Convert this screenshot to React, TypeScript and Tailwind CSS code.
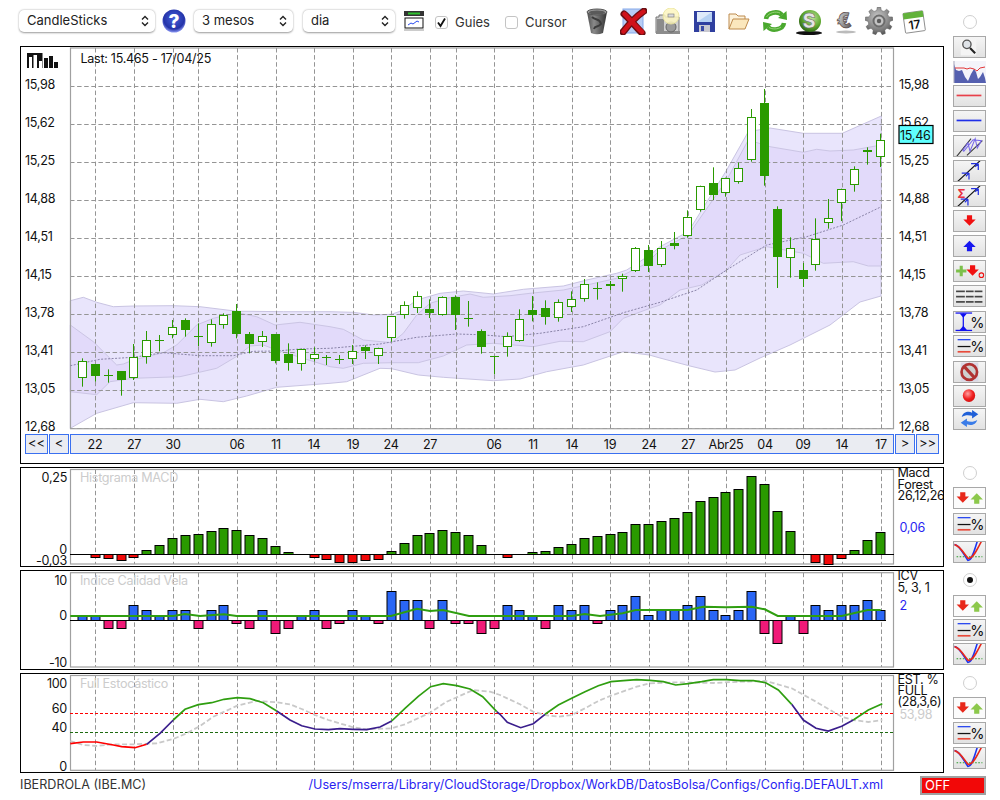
import React from "react";

const GREEN = "#2a9a00";
const VX = [95,134,173,198,237,276,314,353,391,430,456,494,533,572,610,649,688,726,765,803,842,881];
const HY = [86,124,162,200,238,276,314,352,390,428];
const PRICES = ["15,98","15,62","15,25","14,88","14,51","14,15","13,78","13,41","13,05","12,68"];
const cx = (i: number) => Math.floor(82.4 + 12.87 * i) + 0.5;
const snap = (y: number) => Math.round(y) + 0.5;

// [wickTop, bodyTop, bodyBottom, wickBottom, filled]
type C = [number, number, number, number, number];
const zA: C[] = [
  [265,274,320,350,0],[282,282,314,335,1],[298,316,316,338,0],[304,304,326,377,1],[222,262,322,330,0],
  [183,211,259,281,0],[195,209,209,244,0],[150,172,193,205,0],[145,151,176,200,1],[160,199,199,228,0],
  [148,163,217,230,0],[130,136,163,176,0],[102,124,188,205,1],[186,192,218,250,1],[183,199,214,231,0],
  [192,192,269,280,1],[220,252,275,302,1],[236,238,280,302,0],[232,253,265,274,0],[255,262,262,285,0],
  [255,267,267,282,0],[225,244,265,282,0],[226,232,239,267,1],[233,233,256,282,0],[139,139,202,215,0],
  [94,104,133,146,0],[64,77,112,129,0],[88,118,125,144,1],[79,82,133,137,0],[76,82,131,180,1],
  [93,145,145,170,0],[178,184,227,251,1],[258,258,258,313,0],[187,197,229,260,0],[118,146,211,215,0],
  [78,121,133,154,1],[91,115,137,164,1],[88,95,142,155,0],[64,88,109,126,0],[27,41,85,95,0],
  [37,54,54,89,0],[33,41,46,60,0],[11,19,25,65,0],
];
const actual: C[] = [[247,248,270,272,0],[245,250,265,272,1],[241,248,264,267,0]];
const zC: C[] = [
  [426,460,464,478,1],[361,382,434,443,0],[287,287,358,365,0],[232,280,311,330,1],[263,263,307,320,0],
  [218,233,274,281,0],[57,82,208,215,0],[-3,40,254,287,1],[349,358,497,594,1],[442,473,502,563,0],
  [519,541,563,591,1],[385,446,523,542,0],[327,385,397,416,0],[296,296,337,393,0],[229,236,283,305,0],
  [172,179,184,224,0],[131,149,199,231,0],
];
const toA = (c: C): C => [270+c[0]/3,270+c[1]/3,270+c[2]/3,270+c[3]/3,c[4]];
const toC = (c: C): C => [90+c[0]/3,90+c[1]/3,90+c[2]/3,90+c[3]/3,c[4]];
const CANDLES: C[] = [...zA.map(toA), ...actual, ...zC.map(toC)];

type P = [number, number];
const z5 = (a: P[]) => a.map(([x, y]) => [x/3, 270+y/3] as P);
const z6 = (a: P[]) => a.map(([x, y]) => [330+x/3, 270+y/3] as P);
const z7 = (a: P[]) => a.map(([x, y]) => [660+x/3, 90+y/3] as P);
const pts = (a: P[]) => a.map(p => `${p[0].toFixed(1)},${p[1].toFixed(1)}`).join(" ");

const upOuter = [
  ...z5([[211,92],[250,82],[290,97],[340,110],[400,108],[520,107],[600,110],[712,124],[750,124],[850,125],[990,125]]),
  ...z6([[70,127],[130,135],[185,133],[220,120],[260,90],[330,70],[400,63],[490,72],[580,58],[700,48],[770,30],[860,10],[890,0],[960,-45]]),
  ...z7([[0,470],[85,425],[200,240],[265,125],[330,114],[430,130],[547,130],[664,78]]),
];
const upInner = [
  ...z5([[211,165],[280,215],[350,285],[370,282],[400,270],[490,248],[530,225],[590,165],[640,145],[712,128],[770,140],[825,165],[900,157],[990,170]]),
  ...z6([[40,178],[100,210],[185,218],[220,190],[260,135],[300,100],[350,85],[420,72],[460,82],[540,77],[600,70],[700,60],[770,45],[860,25],[950,-20]]),
  ...z7([[0,480],[85,435],[200,270],[265,150],[330,170],[430,187],[470,178],[510,183],[580,180],[664,165]]),
];
const loInner = [
  ...z5([[211,365],[290,374],[330,335],[400,325],[540,320],[650,295],[712,258],[750,228],[790,225],[830,240],[900,262],[990,290]]),
  ...z6([[40,295],[100,280],[185,278],[265,278],[340,258],[410,225],[490,220],[610,230],[690,214],[760,215],[840,185],[880,145],[960,115]]),
  ...z7([[0,645],[60,600],[125,585],[200,540],[240,495],[320,470],[430,490],[490,520],[580,515],[625,528],[664,528]]),
];
const loOuter: P[] = [
  ...z5([[211,475],[290,430],[400,398],[530,400],[600,388],[670,395],[740,378],[830,352],[990,340]]),
  ...z6([[50,335],[150,295],[185,296],[265,315],[340,322],[490,332],[570,327],[650,305],[760,285],[880,245],[958,255]]),
  [660,358],[690,366],[715,372],[735,370],[760,358],[790,345],[830,325],[860,302],[881,296],
];
const sma = [
  ...z5([[211,287],[300,268],[400,262],[490,248],[600,257],[700,257],[760,244],[830,243],[900,237],[990,235]]),
  ...z6([[150,222],[260,202],[380,192],[450,194],[530,200],[630,190],[760,170],[880,128],[990,97]]),
  ...z7([[110,600],[200,540],[280,490],[320,465],[440,440],[550,405],[664,350]]),
];

const MACD: [number, number][] = [
  [1,290],[2,295],[3,301],[4,290],[5,271],[6,256],[7,235],[8,226],[9,223],[10,214],[11,205],[12,211],[13,226],[14,235],[15,259],[16,277],
  [18,290],[19,298],[20,305],[21,305],[22,301],[23,298],[24,274],[25,250],[26,226],[27,220],[28,211],[29,217],[30,226],[31,256],
  [33,290],[35,277],[36,274],[37,262],[38,253],[39,235],[40,229],[41,223],[42,217],[43,193],[44,193],[45,184],[46,175],[47,157],[48,124],[49,112],[50,97],[51,88],[52,49],[53,73],[54,154],[55,214],
  [57,305],[58,311],[59,293],[60,271],[61,241],[62,217],
];
const ICV = [468,468,505,505,436,451,466,451,451,505,451,436,490,505,451,520,505,466,451,505,490,451,466,490,394,421,421,505,421,490,490,520,505,436,451,466,505,436,451,436,490,451,436,409,466,451,451,436,409,451,466,451,394,520,550,466,520,436,451,436,436,421,451];
const icvLine: P[] = [
  ...[[211,468],[520,468],[555,462],[600,468],[672,463],[710,468],[1173,468],[1251,446],[1290,453],[1329,450],[1407,468]].map(([x,y]) => [x/3,460+y/3] as P),
  ...[[0,468],[215,468],[254,462],[300,468],[368,460],[407,450],[563,450],[610,440],[677,442],[755,440],[794,448],[833,468],[1025,468],[1103,450],[1142,450]].map(([x,y]) => [500+x/3,460+y/3] as P),
];
const za = (a: number[][]) => a.map(([x,y]) => [x/3,665+y/3] as P);
const zb = (a: number[][]) => a.map(([x,y]) => [500+x/3,665+y/3] as P);
const stRed = za([[211,236],[250,231],[290,231],[340,240],[365,245],[405,248],[440,238]]);
const stNavy = [
  za([[440,238],[480,205],[520,165]]),
  za([[830,138],[870,165],[905,182],[945,192],[985,194],[1020,191],[1060,193],[1100,194],[1140,186],[1175,168]]),
  [...za([[1490,140]]), ...zb([[0,148],[22,172],[62,188],[100,176],[135,148]])],
  zb([[875,118],[910,165],[948,190],[985,198],[1025,184],[1060,165]]),
];
const stGreen = [
  za([[520,165],[555,133],[595,119],[635,113],[672,103],[712,98],[750,101],[790,113],[830,138]]),
  za([[1175,168],[1215,130],[1255,94],[1292,65],[1330,56],[1370,62],[1410,72],[1448,95],[1490,140]]),
  zb([[135,148],[175,120],[215,100],[255,80],[295,62],[333,50],[370,47],[410,44],[450,46],[490,50],[527,60],[565,56],[605,50],[640,44],[680,44],[720,47],[760,47],[797,53],[835,75],[875,118]]),
  zb([[1060,165],[1105,135],[1147,116]]),
];
const stGray = [
  ...za([[211,228],[250,240],[290,243],[340,238],[405,238],[470,235],[520,222],[560,205],[600,183],[640,155],[712,122],[770,108],[830,112],[870,118],[905,132],[945,150],[985,165],[1060,187],[1100,193],[1175,190],[1215,178],[1290,143],[1340,110],[1420,75],[1470,80]]),
  ...zb([[0,90],[60,118],[100,140],[135,150],[175,155],[215,150],[255,130],[295,108],[333,92],[410,65],[450,55],[527,52],[640,54],[720,50],[797,48],[875,70],[948,110],[1025,155],[1060,165],[1105,171],[1147,165]]),
];

function Grid({ top, bottom, hs = [] }: { top: number; bottom: number; hs?: number[] }) {
  return (
    <g>
      {hs.map(y => <line key={y} x1={70} x2={893} y1={y+0.5} y2={y+0.5} stroke="#959595" strokeDasharray="4.5 2.6" />)}
      {VX.map(x => <line key={x} x1={x+0.5} x2={x+0.5} y1={top} y2={bottom} stroke="#959595" strokeDasharray="4.5 2.6" />)}
      <rect x={70.5} y={top} width={823} height={bottom-top} fill="none" stroke="#a0a0a0" strokeWidth={1.2} />
    </g>
  );
}

function T({ x, y, children, fill = "#111", anchor }: { x: number; y: number; children: React.ReactNode; fill?: string; anchor?: "end" | "middle" }) {
  return <text x={x} y={y} fill={fill} textAnchor={anchor} fontSize={12.6} letterSpacing={-0.3}>{children}</text>;
}

function MainChart() {
  return (
    <svg viewBox="21 47 922 386" className="block w-[922px] h-[386px]">
      <polygon points={pts([...upOuter, ...[...loOuter].reverse()])} fill="#e9e5fc" stroke="#c9c4e2" />
      <polygon points={pts([...upInner, ...[...loInner].reverse()])} fill="#e2dafa" stroke="#cbc5e4" />
      <Grid top={48} bottom={428.7} hs={HY} />
      <polyline points={pts(sma)} fill="none" stroke="#8a84a8" strokeDasharray="2 1.5" />
      {CANDLES.map((c, i) => {
        const x = cx(i), t = snap(c[1]), b = snap(c[2]);
        return (
          <g key={i}>
            <line x1={x} x2={x} y1={c[0]} y2={c[3]} stroke={GREEN} />
            {c[1] === c[2]
              ? <line x1={x-4.5} x2={x+4.5} y1={t} y2={t} stroke={GREEN} />
              : <rect x={x-4} y={t} width={8} height={b-t} fill={c[4] ? GREEN : "#fff"} stroke={GREEN} />}
          </g>
        );
      })}
      <g>
        <path fill="#111" d="M27 53h15.500v15h-15.500z M44 58h4v10h-4z M49 56h4v12h-4z M54 62h4v6h-4z" />
        <path fill="#fff" d="M29 57h3v11h-3z M33.500 55h3.500v13h-3.500z M39 61h3v7h-3z" />
      </g>
      {PRICES.map((p, i) => <T key={p} x={25} y={HY[i]+2.7}>{p}</T>)}
      {PRICES.map((p, i) => <T key={"r"+p} x={899} y={HY[i]+2.7}>{p}</T>)}
      <T x={80.5} y={63.3}>Last: 15.465 - 17/04/25</T>
      <rect x={899} y={125.5} width={34} height={18} fill="#5fffff" stroke="#000" strokeWidth={1.2} />
      <T x={900} y={140}>15,46</T>
    </svg>
  );
}

function Dates() {
  const L: [number, string][] = [[95,"22"],[134,"27"],[173,"30"],[237,"06"],[276,"11"],[314,"14"],[353,"19"],[391,"24"],[430,"27"],[494,"06"],[533,"11"],[572,"14"],[610,"19"],[649,"24"],[688,"27"],[726,"Abr25"],[765,"04"],[803,"09"],[842,"14"],[881,"17"]];
  return (
    <svg viewBox="71 435 822 18" className="block w-full h-full">
      {L.map(([x, s]) => <T key={x+s} x={x} y={449.3} anchor="middle">{s}</T>)}
    </svg>
  );
}

function NavBtn({ w, children }: { w: string; children: string }) {
  return <div className={`${w} h-[20px] flex items-center justify-center border border-[#3a70f0] bg-[#eaecf2] text-[13px] text-[#111]`}>{children}</div>;
}

function MacdPanel() {
  return (
    <svg viewBox="21 468 922 98" className="block w-[922px] h-[98px]">
      <Grid top={469.5} bottom={564} />
      <T x={80} y={482} fill="#ccc">Histgrama MACD</T>
      {MACD.map(([i, z]) => {
        const y = snap(460+z/3), x = cx(i);
        return y < 554
          ? <rect key={i} x={x-4.5} y={y} width={9} height={554.5-y} fill={GREEN} stroke="#000" />
          : <rect key={i} x={x-4.5} y={554.5} width={9} height={y-554.5} fill="#f20a0a" stroke="#000" />;
      })}
      <line x1={70} x2={894} y1={554.5} y2={554.5} stroke="#000" />
      <T x={67} y={482} anchor="end">0,25</T>
      <T x={67} y={554} anchor="end">0</T>
      <T x={67} y={564.7} anchor="end">-0,03</T>
      <T x={897.5} y={477.3}>Macd</T>
      <T x={897.5} y={489}>Forest</T>
      <T x={897.5} y={500}>26,12,26</T>
      <T x={899.5} y={532} fill="#2a1ff2">0,06</T>
    </svg>
  );
}

function IcvPanel() {
  return (
    <svg viewBox="21 571 922 98" className="block w-[922px] h-[98px]">
      <Grid top={572.7} bottom={667} />
      <T x={80} y={585.3} fill="#ccc">Indice Calidad Vela</T>
      {ICV.map((z, i) => {
        const y = snap(460+z/3), x = cx(i);
        return y < 620
          ? <rect key={i} x={x-4.5} y={y} width={9} height={620.5-y} fill="#2a66f5" stroke="#000" />
          : <rect key={i} x={x-4.5} y={620.5} width={9} height={y-620.5} fill="#f01a78" stroke="#000" />;
      })}
      <line x1={70} x2={886} y1={620.5} y2={620.5} stroke="#000" />
      <polyline points={pts(icvLine)} fill="none" stroke="#2f9e10" strokeWidth={2} />
      <T x={67} y={585} anchor="end">10</T>
      <T x={67} y={620} anchor="end">0</T>
      <T x={67} y={667.3} anchor="end">-10</T>
      <T x={897.5} y={580.3}>ICV</T>
      <T x={897.5} y={592}>5, 3, 1</T>
      <T x={899.5} y={610} fill="#2a1ff2">2</T>
    </svg>
  );
}

function StochPanel() {
  return (
    <svg viewBox="21 674 922 98" className="block w-[922px] h-[98px]">
      <Grid top={675.5} bottom={770.3} />
      <line x1={70} x2={894} y1={713.5} y2={713.5} stroke="#f00" strokeDasharray="3 2" />
      <line x1={70} x2={894} y1={732.5} y2={732.5} stroke="#1e6b10" strokeDasharray="3 2" />
      <polyline points={pts(stGray)} fill="none" stroke="#c9c9c9" strokeWidth={1.8} strokeDasharray="5 2.5" />
      <polyline points={pts(stRed)} fill="none" stroke="#f00" strokeWidth={1.7} />
      {stNavy.map((l, i) => <polyline key={i} points={pts(l)} fill="none" stroke="#3a1e8c" strokeWidth={1.7} />)}
      {stGreen.map((l, i) => <polyline key={i} points={pts(l)} fill="none" stroke="#2f9e10" strokeWidth={1.7} />)}
      <T x={80} y={688} fill="#ccc">Full Estocástico</T>
      <T x={67} y={688.3} anchor="end">100</T>
      <T x={67} y={713.3} anchor="end">60</T>
      <T x={67} y={732.3} anchor="end">40</T>
      <T x={67} y={771} anchor="end">0</T>
      <T x={897.5} y={683.7}>EST. %</T>
      <T x={897.5} y={695}>FULL</T>
      <T x={897.5} y={705.7}>(28,3,6)</T>
      <T x={899.5} y={719.3} fill="#ccc">53,98</T>
    </svg>
  );
}

function Select({ w, label }: { w: string; label: string }) {
  return (
    <div className={`${w} h-[22px] flex items-center justify-between pl-[8px] pr-[6px] bg-white rounded-[5px] shadow-[0_0.5px_2px_rgba(0,0,0,0.4)] text-[13px] text-[#222]`}>
      <span>{label}</span>
      <svg width="8" height="12" viewBox="0 0 8 12" fill="none" stroke="#222" strokeWidth="1.4"><path d="M1 4.5 4 1.5 7 4.5M1 7.5 4 10.5 7 7.5" /></svg>
    </div>
  );
}

function Check({ on, className }: { on?: boolean; className: string }) {
  return (
    <div className={`w-[13px] h-[13px] flex items-center justify-center rounded-[3px] bg-white border border-[#c4c4c4] ${className}`}>
      {on && <svg width="11" height="11" viewBox="0 0 11 11" fill="none" stroke="#111" strokeWidth="1.8"><path d="M2 5.5 4.5 9 9 1.5" /></svg>}
    </div>
  );
}

function HelpIcon() {
  return (
    <svg width="24" height="24" viewBox="0 0 24 24">
      <defs><radialGradient id="hb" cx="50%" cy="40%" r="60%"><stop offset="0" stopColor="#4660dc" /><stop offset="0.75" stopColor="#2433a8" /><stop offset="1" stopColor="#8c98f4" /></radialGradient></defs>
      <circle cx="12" cy="12" r="11.5" fill="url(#hb)" />
      <text x="12" y="18.500" textAnchor="middle" fontSize="19" fontWeight="800" fill="#fff">?</text>
    </svg>
  );
}
function ChartIcon() {
  return (
    <svg width="20" height="20" viewBox="0 0 20 20" className="ml-[9px]">
      <rect y="0" width="20" height="5" fill="#333" />
      <rect x="4" y="1.5" width="12" height="2" fill="#2ec22e" />
      <rect x="1" y="7" width="18" height="10" fill="#fff" stroke="#111" />
      <path d="M4 14l3-2 2 1 4-3 2 1" fill="none" stroke="#2a4cf0" />
      <rect y="18" width="20" height="2" fill="#ccc" />
    </svg>
  );
}
function Trash() {
  return (
    <svg width="22" height="27" viewBox="0 0 22 27" className="ml-[21px]">
      <defs><linearGradient id="tr" x1="0" x2="1"><stop offset="0" stopColor="#4e4e4e" /><stop offset="0.35" stopColor="#8a8a8a" /><stop offset="0.7" stopColor="#5a5a5a" /><stop offset="1" stopColor="#333" /></linearGradient></defs>
      <path d="M1 4 5 25q6 2.500 12 0L21 4z" fill="url(#tr)" />
      <ellipse cx="11" cy="4" rx="10" ry="3" fill="#9a9a9a" stroke="#555" />
      <ellipse cx="11" cy="4.5" rx="8" ry="2" fill="#5a5a5a" />
      <path d="M6 9c4 4 8 1 9 7-3 4-6 1-7 5" fill="none" stroke="#3b3b3b" strokeWidth="2" />
    </svg>
  );
}
function XIcon() {
  return (
    <svg width="27" height="27" viewBox="0 0 27 27" className="ml-[12px]">
      <rect x="3" y="1" width="20" height="24" fill="#b7cdf5" stroke="#86a9ea" />
      <path d="M4 6 C9 10 15 18 22 25 M24 3 C17 8 10 15 3 24" fill="none" stroke="#6b0f12" strokeWidth="7" strokeLinecap="round" />
      <path d="M4.5 6 C9 10 15 18 22 24 M23.5 3.5 C17 8 10 15 3.5 23.5" fill="none" stroke="#d0121a" strokeWidth="4.5" strokeLinecap="round" />
    </svg>
  );
}
function Camera() {
  return (
    <svg width="28" height="27" viewBox="0 0 28 27" className="ml-[8px]">
      <path d="M1 9h3V7h6v2h14v16H1z" fill="#cfcfcf" stroke="#777" />
      <rect x="1" y="23" width="24" height="3" fill="#8c8c8c" />
      <rect x="2" y="11" width="7" height="12" fill="#8b8b8b" />
      <circle cx="16" cy="19" r="5" fill="#9a9a9a" stroke="#666" />
      <circle cx="16" cy="8" r="8" fill="#fdf6c0" opacity="0.85" stroke="#ece69b" />
      <rect x="13" y="6" width="6" height="3" fill="#ddd" stroke="#777" strokeWidth="0.6" />
    </svg>
  );
}
function Floppy() {
  return (
    <svg width="21" height="21" viewBox="0 0 21 21" className="ml-[11px]">
      <path d="M0 0h21v21H0z" fill="#2f3f9f" />
      <rect x="3" y="1" width="15" height="10" fill="#b6d1f3" />
      <path d="M3 1h15L3 11z" fill="#dfeafa" />
      <rect x="5" y="14" width="11" height="7" fill="#c8c8d0" />
      <rect x="7" y="15" width="3" height="5" fill="#3a4aa5" />
    </svg>
  );
}
function Folder() {
  return (
    <svg width="22" height="20" viewBox="0 0 22 20" className="ml-[13px]">
      <path d="M1 18V3h7l2 2h7v3" fill="#fdf3dc" stroke="#bd8a4d" />
      <path d="M1 18 5 8h16l-4 10z" fill="#fbe7bd" stroke="#bd8a4d" />
    </svg>
  );
}
function Refresh() {
  return (
    <svg width="24" height="24" viewBox="0 0 24 24" className="ml-[13px]">
      <g fill="none" stroke="#4aa82e" strokeWidth="4.5">
        <path d="M3 10C4 3 15 1.500 19 6" />
        <path d="M21 14C20 21 9 22.500 5 18" />
      </g>
      <path d="M23.500 2 24 11 15 9zM.5 22 0 13l9 2z" fill="#4aa82e" />
      <g fill="none" stroke="#a8dc8c" strokeWidth="0.8">
        <path d="M3.500 8C6 3.500 13 2 17 4" />
        <path d="M6 18.500c3 2 9 2 12-.5" />
      </g>
    </svg>
  );
}
function Coin() {
  return (
    <svg width="26" height="27" viewBox="0 0 26 27" className="ml-[9px]">
      <defs><radialGradient id="cg" cx="60%" cy="35%" r="70%"><stop offset="0" stopColor="#bfe59a" /><stop offset="0.6" stopColor="#5ea82f" /><stop offset="1" stopColor="#2a5f12" /></radialGradient></defs>
      <ellipse cx="13" cy="25" rx="13" ry="2" fill="#111" />
      <circle cx="14" cy="13" r="11" fill="url(#cg)" />
      <text x="13" y="20" textAnchor="middle" fontSize="20" fontWeight="800" fill="#e4e4e4" stroke="#666" strokeWidth="0.5">S</text>
    </svg>
  );
}
function Euro() {
  return (
    <svg width="25" height="26" viewBox="0 0 25 26" className="ml-[10px]">
      <defs><linearGradient id="eg" x1="0" y1="0" x2="1" y2="1"><stop offset="0" stopColor="#f2f2f2" /><stop offset="0.5" stopColor="#9a9a9a" /><stop offset="1" stopColor="#4a3c3c" /></linearGradient></defs>
      <ellipse cx="14" cy="24" rx="10" ry="1.5" fill="#bbb" />
      <text x="12" y="20" textAnchor="middle" fontSize="21" fontWeight="900" fill="url(#eg)" stroke="#5a4a4a" strokeWidth="0.7" transform="rotate(-10 12 13)">€</text>
    </svg>
  );
}
const gearPath = (() => {
  const n = 9, out = 14, inn = 10.8;
  let d = "";
  for (let i = 0; i < n; i++) {
    const a = (i / n) * Math.PI * 2 - Math.PI / 2, s = Math.PI / n;
    const p = [[inn, a - s * 0.62], [out, a - s * 0.34], [out, a + s * 0.34], [inn, a + s * 0.62]];
    p.forEach(([r, t], k) => {
      d += `${i === 0 && k === 0 ? "M" : "L"}${(14 + r * Math.cos(t)).toFixed(2)} ${(14 + r * Math.sin(t)).toFixed(2)}`;
    });
  }
  return d + "Z";
})();
function Gear() {
  return (
    <svg width="28" height="28" viewBox="0 0 28 28" className="ml-[8px]">
      <defs><radialGradient id="gg" cx="45%" cy="35%" r="70%"><stop offset="0" stopColor="#c8c8c8" /><stop offset="0.7" stopColor="#7c7c7c" /><stop offset="1" stopColor="#4c4c4c" /></radialGradient></defs>
      <path d={gearPath} fill="url(#gg)" stroke="#5c5c5c" strokeWidth="0.5" />
      <circle cx="14" cy="14" r="5.5" fill="#c4c4c4" stroke="#6c6c6c" strokeWidth="2" />
      <circle cx="14" cy="14" r="2.2" fill="#5c5c5c" />
    </svg>
  );
}
function Calendar() {
  return (
    <svg width="24" height="25" viewBox="0 0 24 25" className="ml-[9px]">
      <g transform="rotate(-8 12 12)">
        <rect x="2" y="3" width="20" height="20" rx="1" fill="#fff" stroke="#666" strokeWidth="0.7" />
        <rect x="2" y="3" width="20" height="6" fill="#62b23a" />
        <text x="12" y="20" textAnchor="middle" fontSize="12" fill="#111" fontWeight="600">17</text>
      </g>
    </svg>
  );
}

function Radio({ on, className }: { on?: boolean; className: string }) {
  return (
    <div className={`w-[14px] h-[14px] mx-auto flex items-center justify-center rounded-full bg-white border-[1.5px] border-[#cfcfcf] ${className}`}>
      {on && <div className="w-[6px] h-[6px] rounded-full bg-[#111]" />}
    </div>
  );
}

function Btn({ className, children, white }: { className: string; children: React.ReactNode; white?: boolean }) {
  return (
    <div className={`w-[33px] h-[22px] border-[1.5px] border-[#a8a8a8] ${white ? "bg-[#fbfbfb]" : "bg-linear-to-b from-[#f5f5f5] to-[#e2e2e2]"} ${className}`}>
      <svg viewBox="1.5 1.5 30 19" className="block w-full h-full" preserveAspectRatio="none">{children}</svg>
    </div>
  );
}

const Down = ({ x, y, c = "#f01010" }: { x: number; y: number; c?: string }) => <path d={`M${x-2.5} ${y-5}h5v4h3.5l-6 6-6-6h3.5z`} fill={c} />;
const Up = ({ x, y, c = "#1818f0" }: { x: number; y: number; c?: string }) => <path d={`M${x-2.5} ${y+5}h5v-4h3.5l-6-6-6 6h3.5z`} fill={c} />;
const Arrows = () => (<><Down x={10} y={10.5} c="#e8281a" /><Up x={23.5} y={11.5} c="#8cc84b" /></>);
const LinesPct = () => (
  <>
    <line x1={5} x2={17.5} y1={5} y2={5} stroke="#2040f0" strokeWidth={1.2} />
    <line x1={5} x2={17.5} y1={11.5} y2={11.5} stroke="#111" strokeWidth={1.2} />
    <line x1={5} x2={17.5} y1={16.5} y2={16.5} stroke="#e84a3a" strokeWidth={1.6} />
    <text x={24} y={17} textAnchor="middle" fontSize={14} fill="#111">%</text>
  </>
);
const Curves = () => (
  <>
    <line x1={4} x2={29} y1={15.5} y2={15.5} stroke="#2a9a2a" strokeDasharray="1.5 1.5" />
    <path d="M2 4C7 4 11 14 15 19 19 19 21 10 24 1" fill="none" stroke="#1c34f0" strokeWidth={1.5} />
    <path d="M2 4C7 5 11 12 15 17 20 18 24 8 28 1" fill="none" stroke="#e8281a" strokeWidth={1.5} />
  </>
);
const Fork = ({ x, y }: { x: number; y: number }) => <path d={`M${x-4} ${y}h7M${x+3} ${y}v6M${x+3} ${y}l-3 3`} fill="none" stroke="#2330e0" strokeWidth={1.2} />;

function SideColumn() {
  return (
    <div className="w-[33px] ml-[9px] flex flex-col">
      <Radio className="mt-[15px]" />
      <Btn className="mt-[7px]">
        <rect x={8} y={3} width={15} height={16} fill="#f4f4f4" />
        <line x1={17} y1={12} x2={22} y2={17} stroke="#222" strokeWidth={2} />
        <circle cx={14} cy={8.5} r={4} fill="#dfe3e8" stroke="#555" strokeWidth={1.3} />
      </Btn>
      <div className="mt-[3px] w-[33px] h-[22px] bg-[#f4f4fa]">
        <svg viewBox="0 0 33 22" className="block w-full h-full">
          <path d="M1 22V3l2 6 3 1 3-1 3 7 3 4 3-7 3-5 2 3 2 7 2-2 3-5 2 6 1 5z" fill="#5560b0" />
          <path d="M2 7h9l3 1 3-1 4 1 3 2 3-3 5-1" fill="none" stroke="#e02020" strokeWidth={0.9} />
          <line x1={1} x2={1} y1={0} y2={22} stroke="#aab" />
        </svg>
      </div>
      <Btn className="mt-[2px]"><line x1={4} x2={28} y1={10.5} y2={10.5} stroke="#e8404a" strokeWidth={1.6} /></Btn>
      <Btn className="mt-[3px]"><line x1={4} x2={28} y1={10.5} y2={10.5} stroke="#2030e8" strokeWidth={1.6} /></Btn>
      <Btn className="mt-[3px]">
        <line x1={4} y1={21} x2={18} y2={4} stroke="#333" /><line x1={14} y1={20} x2={29} y2={6} stroke="#333" />
        <path d="M10 15 15 8l2 8 5-12 2 9 4-7-8-1-9 11z" fill="none" stroke="#7464e8" />
      </Btn>
      <Btn className="mt-[3px]">
        <line x1={5} y1={21} x2={27} y2={1} stroke="#111" strokeWidth={1.1} />
        <Fork x={13} y={13} /><Fork x={22} y={4} />
      </Btn>
      <Btn className="mt-[3px]">
        <line x1={5} y1={21} x2={27} y2={1} stroke="#111" strokeWidth={1.1} />
        <Fork x={12} y={14} /><Fork x={22} y={4} />
        <text x={5} y={13} fontSize={11} fontWeight={700} fill="#e83040">Σ</text>
      </Btn>
      <Btn className="mt-[3px]"><Down x={16.5} y={10.5} /></Btn>
      <Btn className="mt-[3px]"><Up x={16.5} y={11} /></Btn>
      <Btn className="mt-[3px]">
        <path d="M7 6h3v3.5h3.5v3H10V16H7v-3.500H3.500v-3H7z" fill="#7cc04a" />
        <Down x={19.5} y={10.5} />
        <circle cx={28} cy={15} r={2.2} fill="none" stroke="#f01010" />
      </Btn>
      <Btn className="mt-[3px]">
        {[6.6, 11.6, 16.6].map(y => <g key={y} stroke="#444" strokeWidth={1.6}><line x1={3.5} x2={12} y1={y} y2={y} /><line x1={13} x2={20.5} y1={y} y2={y} /><line x1={21.5} x2={29} y1={y} y2={y} /></g>)}
      </Btn>
      <Btn className="mt-[4px]">
        <g stroke="#1010f0" strokeWidth={1.2}><line x1={3} x2={19} y1={2.5} y2={2.5} /><line x1={3} x2={19} y1={19} y2={19} /><line x1={10.5} x2={10.5} y1={3} y2={18} /></g>
        <path d="M7 3h7l-3.500 4zM7 18.500h7l-3.500-4z" fill="#1010f0" />
        <text x={24} y={16.500} textAnchor="middle" fontSize={14} fill="#111">%</text>
      </Btn>
      <Btn className="mt-[2px]"><LinesPct /></Btn>
      <Btn className="mt-[4px]">
        <rect x={8} y={2} width={17} height={18} fill="#d9d8e6" />
        <circle cx={16.3} cy={11} r={7.500} fill="#cfcfcf" stroke="#b03232" strokeWidth={2.6} />
        <line x1={11} y1={5.500} x2={21.500} y2={16.500} stroke="#b03232" strokeWidth={3} />
      </Btn>
      <Btn className="mt-[2px]">
        <defs><radialGradient id="rb" cx="40%" cy="35%" r="70%"><stop offset="0" stopColor="#ffa0a0" /><stop offset="0.6" stopColor="#f02020" /><stop offset="1" stopColor="#d01010" /></radialGradient></defs>
        <circle cx={16} cy={10.6} r={6} fill="url(#rb)" />
      </Btn>
      <Btn className="mt-[1px]">
        <path d="M9 9C10 5 15 3 19 5V2.500l6 4-6 4V8C16 7 12 7 9 9z" fill="#2060d8" />
        <path d="M24 12c-1 4-6 6-10 4v2.500l-6-4 6-4V13c3 1 7 1 10-1z" fill="#3a7ce8" />
      </Btn>

      <Radio className="mt-[36px]" />
      <Btn white className="mt-[7px]"><Arrows /></Btn>
      <Btn className="mt-[4px]"><LinesPct /></Btn>
      <Btn className="mt-[6px]"><Curves /></Btn>

      <Radio on className="mt-[10px]" />
      <Btn white className="mt-[8px]"><Arrows /></Btn>
      <Btn className="mt-[2px]"><LinesPct /></Btn>
      <Btn className="mt-[2px]"><Curves /></Btn>

      <Radio className="mt-[11px]" />
      <Btn white className="mt-[7px]"><Arrows /></Btn>
      <Btn className="mt-[3px]"><LinesPct /></Btn>
      <Btn className="mt-[3px]"><Curves /></Btn>
    </div>
  );
}

export default function App() {
  return (
    <div className="w-[1000px] h-[800px] bg-white overflow-hidden font-['Inter',sans-serif]">
      <div className="flex">
        <div className="w-[944px] shrink-0">
          <div className="h-[46px] flex items-center pl-[19px] pb-[4px]">
            <Select w="w-[136px]" label="CandleSticks" />
            <div className="ml-[7px]"><HelpIcon /></div>
            <Select w="w-[99px] ml-[8px]" label="3 mesos" />
            <Select w="w-[92px] ml-[10px]" label="dia" />
            <ChartIcon />
            <Check on className="ml-[11px] mt-[3px]" />
            <span className="w-[34px] ml-[7px] mt-[3px] text-[13px] text-[#333]">Guies</span>
            <Check className="ml-[16px] mt-[3px]" />
            <span className="w-[40px] ml-[7px] mt-[3px] text-[13px] text-[#333]">Cursor</span>
            <Trash /><XIcon /><Camera /><Floppy /><Folder /><Refresh /><Coin /><Euro /><Gear /><Calendar />
          </div>
          <div className="ml-[20px] w-[924px] h-[418px] border border-black overflow-hidden">
            <MainChart />
            <div className="flex items-center pl-[4px] mt-[1px]">
              <NavBtn w="w-[23px]">{"<<"}</NavBtn>
              <div className="w-[1px]" />
              <NavBtn w="w-[20px]">{"<"}</NavBtn>
              <div className="w-[824px] h-[20px] ml-[1px] border border-[#3a70f0] bg-[#eaecf2]"><Dates /></div>
              <div className="w-[1px]" />
              <NavBtn w="w-[20px]">{">"}</NavBtn>
              <div className="w-[1px]" />
              <NavBtn w="w-[23px]">{">>"}</NavBtn>
            </div>
          </div>
          <div className="ml-[20px] w-[924px] h-[100px] mt-[3px] border border-black overflow-hidden"><MacdPanel /></div>
          <div className="ml-[20px] w-[924px] h-[100px] mt-[3px] border border-black overflow-hidden"><IcvPanel /></div>
          <div className="ml-[20px] w-[924px] h-[100px] mt-[3px] border border-black overflow-hidden"><StochPanel /></div>
        </div>
        <SideColumn />
      </div>
      <div className="ml-[20px] w-[966px] h-[19px] mt-[3px] flex items-center">
        <span className="text-[12.6px] text-[#333]">IBERDROLA (IBE.MC)</span>
        <span className="ml-auto mr-[37px] text-[12.6px] text-[#2a1ff2]">/Users/mserra/Library/CloudStorage/Dropbox/WorkDB/DatosBolsa/Configs/Config.DEFAULT.xml</span>
        <div className="w-[66px] h-[19px] pl-[3px] flex items-center border-2 border-[#a0a0a0] bg-[#f20808] text-[13px] text-white">OFF</div>
      </div>
    </div>
  );
}
